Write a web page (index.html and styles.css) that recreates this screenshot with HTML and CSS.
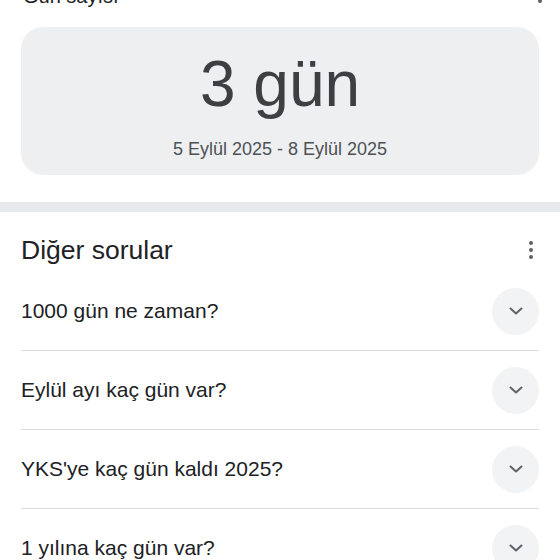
FILE: index.html
```html
<!DOCTYPE html>
<html lang="tr">
<head>
<meta charset="utf-8">
<title>Gün sayısı</title>
<link rel="stylesheet" href="styles.css">
</head>
<body>
<section class="calc">
  <div class="top-header">
    <span class="top-title">Gün sayısı</span>
    <svg class="dots top-dots" width="4" height="18" viewBox="0 0 4 18"><circle cx="2" cy="2" r="2"/><circle cx="2" cy="9" r="2"/><circle cx="2" cy="16" r="2"/></svg>
  </div>
  <div class="result-card">
    <div class="result-value">3 gün</div>
    <div class="result-range">5 Eylül 2025 - 8 Eylül 2025</div>
  </div>
</section>
<div class="band"></div>
<section class="questions">
  <div class="q-header">
    <h2 class="q-title">Diğer sorular</h2>
    <svg class="dots" width="4" height="18" viewBox="0 0 4 18"><circle cx="2" cy="2" r="2"/><circle cx="2" cy="9" r="2"/><circle cx="2" cy="16" r="2"/></svg>
  </div>
  <div class="q-row"><span class="q-text">1000 gün ne zaman?</span><span class="chev"><svg width="14" height="8" viewBox="0 0 14 8"><polyline points="1.5,1.5 7,6.5 12.5,1.5"/></svg></span></div>
  <div class="q-row"><span class="q-text">Eylül ayı kaç gün var?</span><span class="chev"><svg width="14" height="8" viewBox="0 0 14 8"><polyline points="1.5,1.5 7,6.5 12.5,1.5"/></svg></span></div>
  <div class="q-row"><span class="q-text">YKS'ye kaç gün kaldı 2025?</span><span class="chev"><svg width="14" height="8" viewBox="0 0 14 8"><polyline points="1.5,1.5 7,6.5 12.5,1.5"/></svg></span></div>
  <div class="q-row"><span class="q-text">1 yılına kaç gün var?</span><span class="chev"><svg width="14" height="8" viewBox="0 0 14 8"><polyline points="1.5,1.5 7,6.5 12.5,1.5"/></svg></span></div>
</section>
</body>
</html>
```
FILE: styles.css
```css
html, body {
  margin: 0;
  padding: 0;
  background: #ffffff;
  font-family: "Liberation Sans", Arial, Helvetica, sans-serif;
  color: #202124;
  overflow: hidden;
}

.calc {
  padding: 0 21px;
}

.top-header {
  display: flex;
  justify-content: space-between;
  align-items: flex-end;
  height: 20px;
  margin-top: -14px;
  padding-left: 2px;
}

.top-title {
  font-size: 20px;
  line-height: 20px;
}

.top-dots {
  margin-right: -3px;
  margin-bottom: 3px;
}

.dots {
  fill: #5f6368;
  flex: none;
}

.result-card {
  margin-top: 21px;
  height: 148px;
  box-sizing: border-box;
  background: #eeeff1;
  border-radius: 22px;
  display: flex;
  flex-direction: column;
  align-items: center;
  padding-top: 25px;
}

.result-value {
  font-size: 64px;
  line-height: 64px;
  color: #3c4043;
}

.result-range {
  margin-top: 23px;
  font-size: 18px;
  line-height: 20px;
  color: #4d5156;
}

.band {
  margin-top: 27px;
  height: 10px;
  background: #e8e9ec;
}

.questions {
  padding: 0 21px;
}

.q-header {
  display: flex;
  justify-content: space-between;
  align-items: center;
  padding-top: 23px;
  padding-bottom: 7px;
  padding-right: 6px;
}

.q-title {
  margin: 0;
  font-weight: normal;
  font-size: 26.5px;
  line-height: 30px;
  color: #202124;
}

.q-row {
  display: flex;
  justify-content: space-between;
  align-items: center;
  height: 79px;
  box-sizing: border-box;
  border-bottom: 1px solid #dadce0;
}

.q-text {
  font-size: 21px;
  color: #202124;
}

.chev {
  width: 47px;
  height: 47px;
  border-radius: 50%;
  background: #f1f3f4;
  display: flex;
  align-items: center;
  justify-content: center;
  flex: none;
}

.chev svg {
  fill: none;
  stroke: #5f6368;
  stroke-width: 2;
  stroke-linecap: round;
  stroke-linejoin: round;
}
```
